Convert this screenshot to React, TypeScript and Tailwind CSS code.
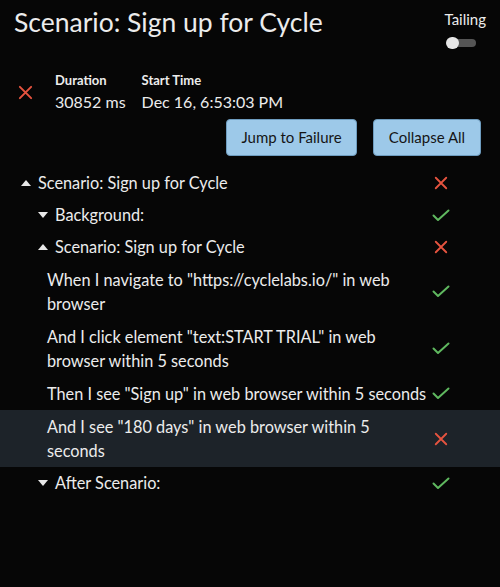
type Status = "pass" | "fail";

function XIcon({ className = "" }: { className?: string }) {
  return (
    <svg viewBox="0 0 16 16" className={className} fill="none" stroke="#e5533f" strokeWidth="2.1" strokeLinecap="round">
      <path d="M2 2 L14 14 M14 2 L2 14" />
    </svg>
  );
}

function CheckIcon({ className = "" }: { className?: string }) {
  return (
    <svg viewBox="0 0 18 13" className={className} fill="none" stroke="#5fb85f" strokeWidth="2" strokeLinecap="round" strokeLinejoin="round">
      <path d="M1.5 6.5 L6 11 L16.5 1.5" />
    </svg>
  );
}

function StatusIcon({ s }: { s: Status }) {
  return s === "fail" ? <XIcon className="w-[14px] h-[14px]" /> : <CheckIcon className="w-[18px] h-[13px]" />;
}

function Caret({ up }: { up: boolean }) {
  return (
    <svg viewBox="0 0 10 6" className="w-[10px] h-[6px] shrink-0" fill="#e8e8e8">
      {up ? <path d="M0 6 L5 0 L10 6 Z" /> : <path d="M0 0 L10 0 L5 6 Z" />}
    </svg>
  );
}

function GroupRow({ label, up, status, level }: { label: string; up: boolean; status: Status; level: number }) {
  return (
    <div className={`flex items-center h-[32px] pr-[50px] ${level === 0 ? "pl-[21px]" : "pl-[38px]"}`}>
      <Caret up={up} />
      <span className="ml-[7px] flex-1">{label}</span>
      <div className="w-[18px] flex justify-center">
        <StatusIcon s={status} />
      </div>
    </div>
  );
}

function StepRow({ label, status, highlight }: { label: string; status: Status; highlight?: boolean }) {
  return (
    <div className={`flex items-center py-[4.5px] pl-[47px] pr-[50px] ${highlight ? "bg-[#1d2329]" : ""}`}>
      <span className="flex-1 pr-[4px]">{label}</span>
      <div className="w-[18px] flex justify-center">
        <StatusIcon s={status} />
      </div>
    </div>
  );
}

export default function App() {
  return (
    <div className="w-[500px] h-[587px] bg-[#060606] text-[#ececec] overflow-hidden" style={{ fontFamily: "Lato, sans-serif" }}>
      <div className="flex justify-between pl-[14px] pr-[14px] pt-[4px]">
        <h1 className="text-[26.5px] leading-[36px] font-normal">Scenario: Sign up for Cycle</h1>
        <div className="flex flex-col items-center pt-[6px]">
          <span className="text-[15px] leading-[18px]">Tailing</span>
          <div className="relative mt-[9px] mr-[9px] w-[30px] h-[12px]">
            <div className="absolute left-[6px] right-0 top-[2px] h-[8px] rounded-full bg-[#555555]" />
            <div className="absolute left-0 top-0 w-[13px] h-[12px] rounded-full bg-[#e6e6e6]" />
          </div>
        </div>
      </div>

      <div className="flex items-center mt-[23px] pl-[18px]">
        <XIcon className="w-[15px] h-[15px]" />
        <div className="ml-[22px] flex flex-col">
          <span className="text-[13px] leading-[16px] font-bold">Duration</span>
          <span className="text-[16px] leading-[20px] mt-[4px]">30852 ms</span>
        </div>
        <div className="ml-[16px] flex flex-col">
          <span className="text-[13px] leading-[16px] font-bold">Start Time</span>
          <span className="text-[16px] leading-[20px] mt-[4px]">Dec 16, 6:53:03 PM</span>
        </div>
      </div>

      <div className="flex justify-end gap-[16px] pr-[19px] mt-[7px]">
        <button className="w-[131px] h-[37px] rounded-[4px] bg-[#9dc9e9] border border-[#6e9cbf] text-[#151515] text-[15px]">
          Jump to Failure
        </button>
        <button className="w-[108px] h-[37px] rounded-[4px] bg-[#9dc9e9] border border-[#6e9cbf] text-[#151515] text-[15px]">
          Collapse All
        </button>
      </div>

      <div className="mt-[11px] text-[16.3px] leading-[24px]">
        <GroupRow label="Scenario: Sign up for Cycle" up status="fail" level={0} />
        <GroupRow label="Background:" up={false} status="pass" level={1} />
        <GroupRow label="Scenario: Sign up for Cycle" up status="fail" level={1} />
        <StepRow label={'When I navigate to "https://cyclelabs.io/" in web browser'} status="pass" />
        <StepRow label={'And I click element "text:START TRIAL" in web browser within 5 seconds'} status="pass" />
        <StepRow label={'Then I see "Sign up" in web browser within 5 seconds'} status="pass" />
        <StepRow label={'And I see "180 days" in web browser within 5 seconds'} status="fail" highlight />
        <GroupRow label="After Scenario:" up={false} status="pass" level={1} />
      </div>
    </div>
  );
}
